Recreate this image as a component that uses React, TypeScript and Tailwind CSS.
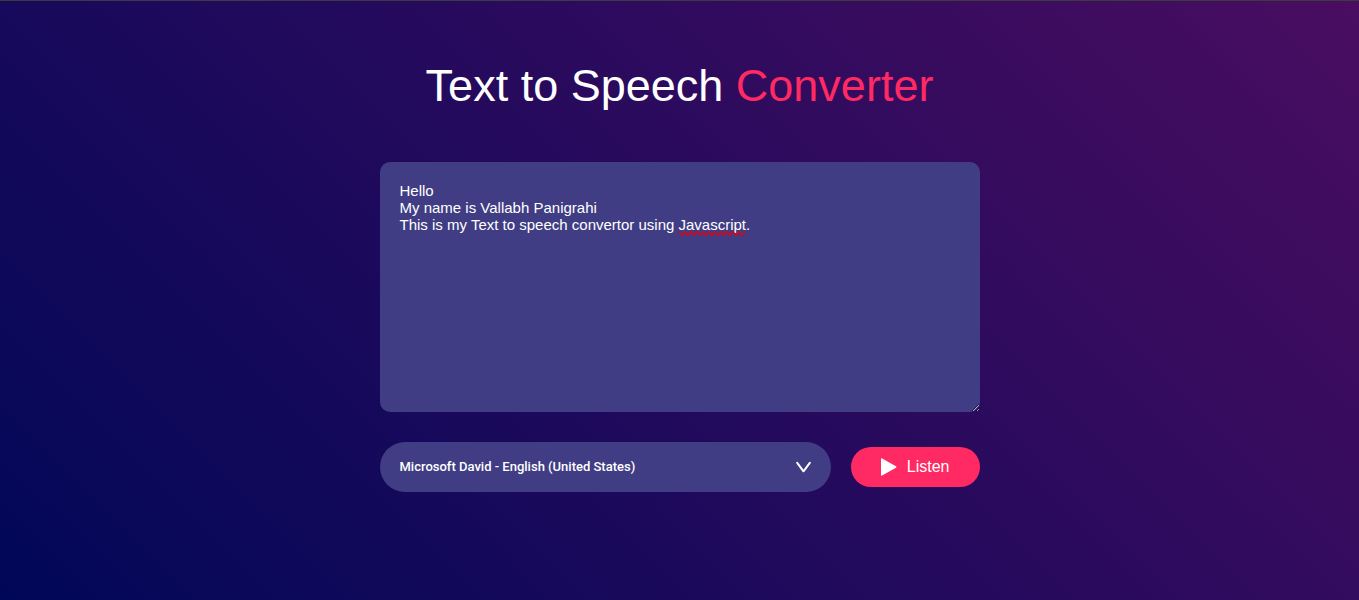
export default function App() {
  return (
    <main className="flex min-h-screen w-full flex-col items-center border-t border-[#3c3c3c] bg-[linear-gradient(45deg,#010758,#490d61)] px-4 pt-[59px] pb-12 font-['Liberation_Sans',Arial,sans-serif] text-white">
      <h1 className="mb-[50px] text-center text-[45px] leading-[52px] font-normal">
        Text to Speech <span className="text-[#ff2963]">Converter</span>
      </h1>
      <div className="relative mb-[30px] w-full max-w-[600px]">
        <textarea
          aria-label="Text to read aloud"
          spellCheck={false}
          className="block h-[250px] w-full rounded-[10px] bg-[#403d84] p-5 text-[15px] leading-[17px] text-white outline-none"
          defaultValue={"Hello\nMy name is Vallabh Panigrahi\nThis is my Text to speech convertor using Javascript."}
        />
        {/* spelling mark under the last word */}
        <svg
          className="pointer-events-none absolute top-[68px] left-[299px]"
          width="69"
          height="7"
          viewBox="0 0 69 7"
          fill="none"
          aria-hidden="true"
        >
          <path
            d="M0 1.5l3 4 3-4 3 4 3-4 3 4 3-4 3 4 3-4 3 4 3-4 3 4 3-4 3 4 3-4 3 4 3-4 3 4 3-4 3 4 3-4 3 4 3-4"
            stroke="#e8000f"
            strokeWidth="1.3"
          />
        </svg>
      </div>
      <div className="flex w-full max-w-[600px] items-center gap-5">
        <div className="relative flex-1">
          <select
            aria-label="Voice"
            className="block h-[50px] w-full appearance-none rounded-full bg-[#403d84] px-5 font-[Roboto,'Liberation_Sans',sans-serif] text-[13px] font-medium text-white outline-none"
          >
            <option>Microsoft David - English (United States)</option>
          </select>
          <svg
            className="pointer-events-none absolute top-[18px] right-5"
            width="15"
            height="15"
            viewBox="0 0 15 15"
            fill="none"
            aria-hidden="true"
          >
            <path d="M1.2 2.9l6.3 8.4 6.3-8.4" stroke="#fff" strokeWidth="2" strokeLinecap="round" strokeLinejoin="round" />
          </svg>
        </div>
        <button
          type="button"
          className="flex h-10 items-center gap-2.5 rounded-full bg-[#ff2963] px-[30px] text-base text-white"
        >
          <svg width="16" height="18" viewBox="0 0 16 18" fill="#fff" aria-hidden="true">
            <path d="M0 1.2Q0 0 1.1.5L15 8.3q1 .7 0 1.4L1.1 17.5Q0 18 0 16.8z" />
          </svg>
          Listen
        </button>
      </div>
    </main>
  );
}
